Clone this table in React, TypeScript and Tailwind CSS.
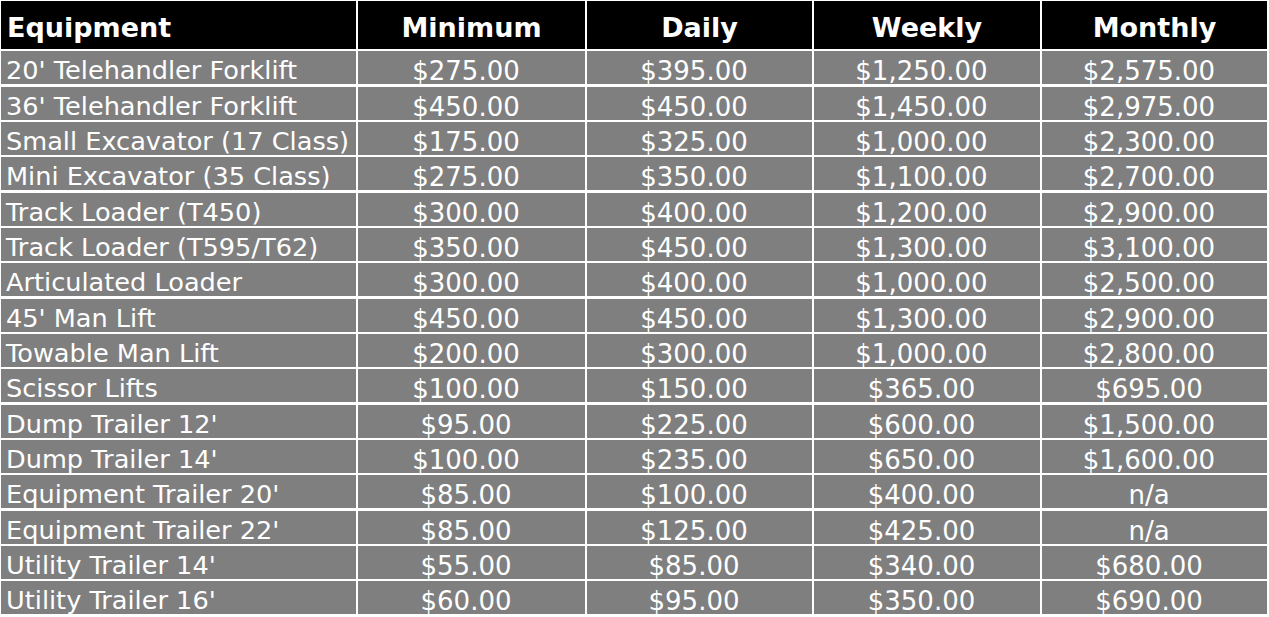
import React from "react";

type Row = {
  name: string;
  minimum: string;
  daily: string;
  weekly: string;
  monthly: string;
};

const rows: Row[] = [
  { name: "20' Telehandler Forklift", minimum: "$275.00", daily: "$395.00", weekly: "$1,250.00", monthly: "$2,575.00" },
  { name: "36' Telehandler Forklift", minimum: "$450.00", daily: "$450.00", weekly: "$1,450.00", monthly: "$2,975.00" },
  { name: "Small Excavator (17 Class)", minimum: "$175.00", daily: "$325.00", weekly: "$1,000.00", monthly: "$2,300.00" },
  { name: "Mini Excavator (35 Class)", minimum: "$275.00", daily: "$350.00", weekly: "$1,100.00", monthly: "$2,700.00" },
  { name: "Track Loader (T450)", minimum: "$300.00", daily: "$400.00", weekly: "$1,200.00", monthly: "$2,900.00" },
  { name: "Track Loader (T595/T62)", minimum: "$350.00", daily: "$450.00", weekly: "$1,300.00", monthly: "$3,100.00" },
  { name: "Articulated Loader", minimum: "$300.00", daily: "$400.00", weekly: "$1,000.00", monthly: "$2,500.00" },
  { name: "45' Man Lift", minimum: "$450.00", daily: "$450.00", weekly: "$1,300.00", monthly: "$2,900.00" },
  { name: "Towable Man Lift", minimum: "$200.00", daily: "$300.00", weekly: "$1,000.00", monthly: "$2,800.00" },
  { name: "Scissor Lifts", minimum: "$100.00", daily: "$150.00", weekly: "$365.00", monthly: "$695.00" },
  { name: "Dump Trailer 12'", minimum: "$95.00", daily: "$225.00", weekly: "$600.00", monthly: "$1,500.00" },
  { name: "Dump Trailer 14'", minimum: "$100.00", daily: "$235.00", weekly: "$650.00", monthly: "$1,600.00" },
  { name: "Equipment Trailer 20'", minimum: "$85.00", daily: "$100.00", weekly: "$400.00", monthly: "n/a" },
  { name: "Equipment Trailer 22'", minimum: "$85.00", daily: "$125.00", weekly: "$425.00", monthly: "n/a" },
  { name: "Utility Trailer 14'", minimum: "$55.00", daily: "$85.00", weekly: "$340.00", monthly: "$680.00" },
  { name: "Utility Trailer 16'", minimum: "$60.00", daily: "$95.00", weekly: "$350.00", monthly: "$690.00" },
];

const headers = ["Minimum", "Daily", "Weekly", "Monthly"];

function PriceCell({ value }: { value: string }) {
  return (
    <div className="bg-[#7f7f7f] text-white text-center pr-[11px] pt-[7px] text-[26px] leading-[26px] whitespace-nowrap">
      {value}
    </div>
  );
}

export default function App() {
  return (
    <div className="w-[1269px] h-[617px] bg-white pt-[1px] pl-[1px] overflow-hidden font-['DejaVu_Sans',sans-serif]">
      <div className="grid grid-cols-[355px_227px_225px_226px_225px] grid-rows-[48px_repeat(16,33px)] gap-x-[2px] gap-y-[2.33px]">
        <div className="bg-black text-white font-bold text-[27px] leading-[27px] pt-[13px] pl-[6px]">
          Equipment
        </div>
        {headers.map((h) => (
          <div
            key={h}
            className="bg-black text-white font-bold text-[27px] leading-[27px] pt-[13px] text-center"
          >
            {h}
          </div>
        ))}
        {rows.map((r) => (
          <React.Fragment key={r.name}>
            <div className="bg-[#7f7f7f] text-white text-[25.6px] leading-[25px] pt-[7px] pl-[5px] whitespace-nowrap">
              {r.name}
            </div>
            <PriceCell value={r.minimum} />
            <PriceCell value={r.daily} />
            <PriceCell value={r.weekly} />
            <PriceCell value={r.monthly} />
          </React.Fragment>
        ))}
      </div>
    </div>
  );
}
